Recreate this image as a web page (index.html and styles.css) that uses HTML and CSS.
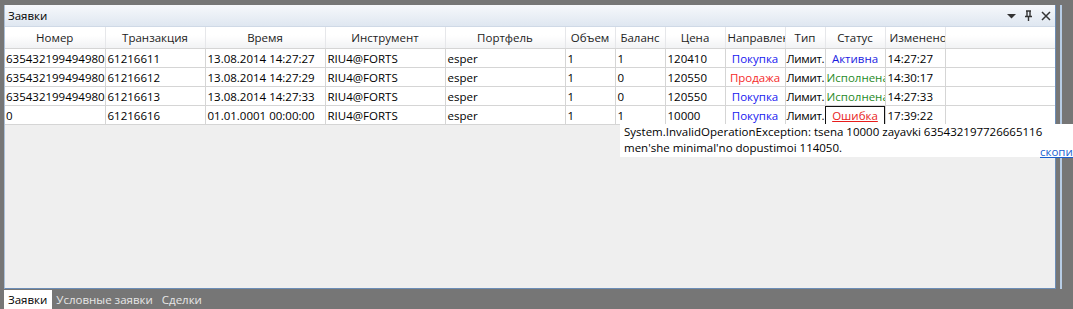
FILE: index.html
```html
<!DOCTYPE html>
<html lang="ru">
<head>
    <meta charset="UTF-8">
    <title>Заявки</title>
    <link rel="stylesheet" href="styles.css">
</head>
<body>
    <div class="dock">
        <div class="dock-row">
            <div class="panel">
                <div class="panel-title">
                    <span>Заявки</span>
                    <div class="title-buttons">
                        <svg width="9" height="6" viewBox="0 0 9 6"><path d="M0 1h9L4.5 5.5z" fill="#333"/></svg>
                        <svg width="9" height="11" viewBox="0 0 9 11"><path d="M2 1h5M3 1v5M6 1v5M1 6.5h7M4.5 7v4" stroke="#333" stroke-width="1.4" fill="none"/></svg>
                        <svg width="10" height="10" viewBox="0 0 10 10"><path d="M1 1l8 8M9 1l-8 8" stroke="#333" stroke-width="1.5"/></svg>
                    </div>
                </div>
                <div class="panel-body">
                    <table class="grid">
                        <colgroup>
                            <col style="width:100px"><col style="width:100px"><col style="width:120px">
                            <col style="width:120px"><col style="width:120px"><col style="width:50px">
                            <col style="width:50px"><col style="width:60px"><col style="width:60px">
                            <col style="width:40px"><col style="width:60px"><col style="width:60px"><col>
                        </colgroup>
                        <thead>
                            <tr>
                                <th>Номер</th><th>Транзакция</th><th>Время</th><th>Инструмент</th>
                                <th>Портфель</th><th>Объем</th><th>Баланс</th><th>Цена</th>
                                <th>Направление</th><th>Тип</th><th>Статус</th><th class="left">Изменено</th><th></th>
                            </tr>
                        </thead>
                        <tbody>
                            <tr>
                                <td>635432199494980001</td><td>61216611</td><td>13.08.2014 14:27:27</td><td>RIU4@FORTS</td>
                                <td>esper</td><td>1</td><td>1</td><td>120410</td>
                                <td class="center buy">Покупка</td><td class="type">Лимит.</td><td class="center active">Активна</td><td>14:27:27</td><td></td>
                            </tr>
                            <tr>
                                <td>635432199494980002</td><td>61216612</td><td>13.08.2014 14:27:29</td><td>RIU4@FORTS</td>
                                <td>esper</td><td>1</td><td>0</td><td>120550</td>
                                <td class="center sell">Продажа</td><td class="type">Лимит.</td><td class="done">Исполнена</td><td>14:30:17</td><td></td>
                            </tr>
                            <tr>
                                <td>635432199494980003</td><td>61216613</td><td>13.08.2014 14:27:33</td><td>RIU4@FORTS</td>
                                <td>esper</td><td>1</td><td>0</td><td>120550</td>
                                <td class="center buy">Покупка</td><td class="type">Лимит.</td><td class="done">Исполнена</td><td>14:27:33</td><td></td>
                            </tr>
                            <tr>
                                <td>0</td><td>61216616</td><td>01.01.0001 00:00:00</td><td>RIU4@FORTS</td>
                                <td>esper</td><td>1</td><td>1</td><td>10000</td>
                                <td class="center buy">Покупка</td><td class="type">Лимит.</td><td class="center error">Ошибка</td><td>17:39:22</td><td></td>
                            </tr>
                        </tbody>
                    </table>
                </div>
            </div>
            <div class="splitter"></div>
        </div>
        <div class="tabs">
            <span class="tab selected">Заявки</span>
            <span class="tab">Условные заявки</span>
            <span class="tab">Сделки</span>
        </div>
    </div>

    <div class="tooltip">
        <div>System.InvalidOperationException: tsena 10000 zayavki 635432197726665116</div>
        <div>men'she minimal'no dopustimoi 114050.</div>
        <a class="copy-link">скопировать</a>
    </div>
</body>
</html>
```

FILE: styles.css
```css
body {
    margin: 0;
    background-color: #767676;
    font-family: "Open Sans", "Noto Sans", sans-serif;
    font-size: 11.5px;
    color: #000;
    overflow: hidden;
}
.dock {
    display: flex;
    flex-direction: column;
    height: 309px;
    width: 1073px;
}
.dock-row {
    display: flex;
    padding-top: 5px;
    padding-left: 4px;
    height: 284px;
}
.panel {
    width: 1050px;
    height: 283px;
    display: flex;
    flex-direction: column;
    border-right: 1px solid #6c8db6;
    border-bottom: 1px solid #6c8db6;
    border-left: 1px solid #a9bfd8;
    background-color: #efefef;
}
.panel-title {
    height: 21px;
    display: flex;
    align-items: center;
    justify-content: space-between;
    padding: 0 0 0 3px;
    background: linear-gradient(#f6f8fb, #dfe7f1);
    border-bottom: 1px solid #cfd9e6;
}
.title-buttons {
    display: flex;
    align-items: center;
    gap: 8px;
    margin-right: 4px;
}
.panel-body {
    flex: 1;
    overflow: hidden;
}
.grid {
    width: 100%;
    table-layout: fixed;
    border-collapse: collapse;
    background-color: #fff;
}
.grid th {
    height: 21px;
    font-weight: normal;
    color: #222;
    background: linear-gradient(#fff 40%, #f1f2f4);
    border-right: 1px solid #e6e7ea;
    border-bottom: 1px solid #d5d5d5;
    white-space: nowrap;
    overflow: hidden;
    padding: 0 2px;
}
.grid th.left {
    text-align: left;
    padding-left: 4px;
}
.grid td {
    height: 18px;
    padding: 0 2px;
    border-right: 1px solid #d5d5d5;
    border-bottom: 1px solid #d5d5d5;
    white-space: nowrap;
    overflow: hidden;
}
.grid td:first-child {
    padding-left: 1px;
}
.grid td.type {
    padding: 0 0 0 1px;
    letter-spacing: -0.3px;
}
.grid td:last-child, .grid th:last-child {
    border-right: none;
}
.center {
    text-align: center;
}
.buy { color: #1717f0; }
.sell { color: #f52a2a; }
.active { color: #1a1adf; }
.done { color: #1f8a1f; padding-left: 1px !important; }
.grid td.error {
    color: #e81c1c;
    text-decoration: underline;
    outline: 1px solid #111;
    outline-offset: -1px;
}
.splitter {
    width: 2px;
    margin-left: 4px;
    background-color: #b7cde6;
}
.tabs {
    display: flex;
    padding-left: 4px;
    margin-top: 1px;
    height: 19px;
    align-items: stretch;
}
.tab {
    color: #e6e6e6;
    padding: 0 5px 0 4px;
    line-height: 19px;
}
.tab.selected {
    background-color: #fff;
    color: #000;
}
.tooltip {
    position: absolute;
    left: 620px;
    top: 124px;
    width: 460px;
    height: 33px;
    padding: 0 0 0 4px;
    background-color: #fff;
    line-height: 16px;
}
.copy-link {
    position: absolute;
    left: 420px;
    top: 20px;
    color: #1a5fd0;
    text-decoration: underline;
}
```
